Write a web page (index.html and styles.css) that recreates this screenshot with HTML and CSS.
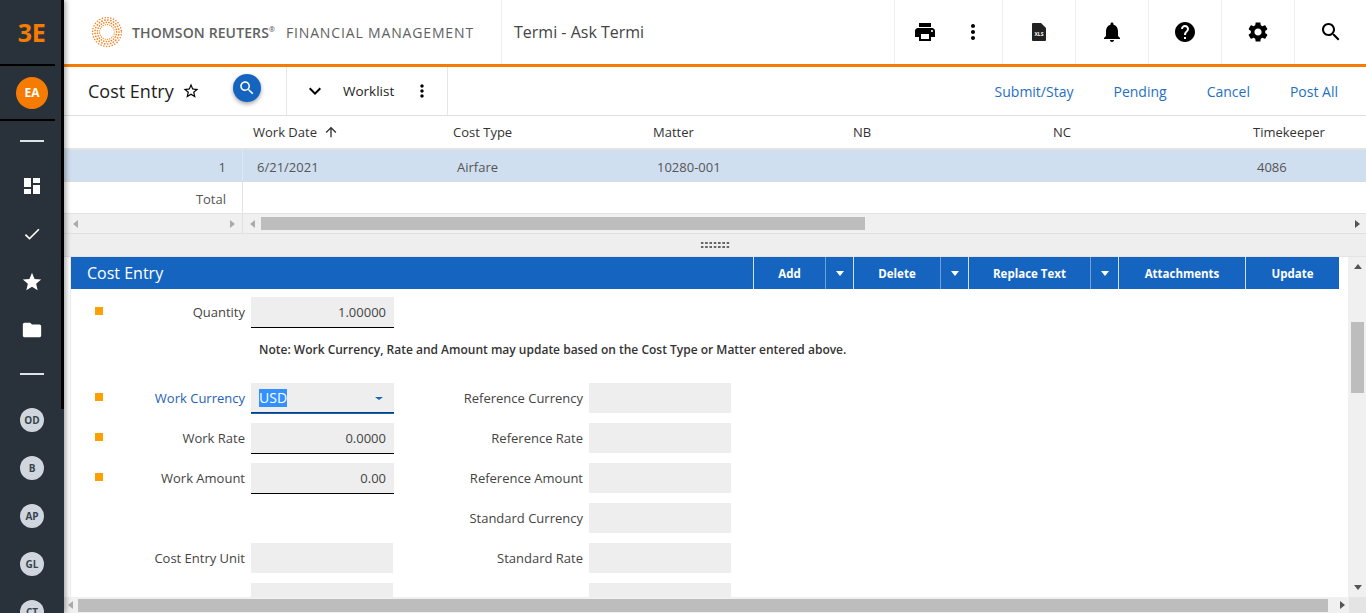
FILE: index.html
```html
<!DOCTYPE html>
<html lang="en">
<head>
  <meta charset="UTF-8">
  <meta name="viewport" content="width=device-width, initial-scale=1">
  <title>Cost Entry</title>
  <link rel="stylesheet" href="styles.css">
</head>
<body>
  <nav class="rail">
    <div class="brand">3E</div>
    <div class="rail-sep"></div>
    <div class="user"><span class="user-badge">EA</span></div>
    <div class="rail-sep"></div>
    <div class="rail-dash"></div>
    <div class="rail-item">
      <svg width="20" height="20" viewBox="0 0 20 20" fill="#fff"><path d="M2 2h7v9H2zM11 2h7v5h-7zM11 9h7v9h-7zM2 13h7v5H2z"/></svg>
    </div>
    <div class="rail-item">
      <svg width="20" height="20" viewBox="0 0 24 24" fill="#fff"><path d="M9 16.17L4.83 12l-1.42 1.41L9 19 21 7l-1.41-1.41z"/></svg>
    </div>
    <div class="rail-item">
      <svg width="22" height="22" viewBox="0 0 24 24" fill="#fff"><path d="M12 17.27L18.18 21l-1.64-7.03L22 9.24l-7.19-.61L12 2 9.19 8.63 2 9.24l5.46 4.73L5.82 21z"/></svg>
    </div>
    <div class="rail-item">
      <svg width="22" height="22" viewBox="0 0 24 24" fill="#fff"><path d="M10 4H4c-1.1 0-1.99.9-1.99 2L2 18c0 1.1.9 2 2 2h16c1.1 0 2-.9 2-2V8c0-1.1-.9-2-2-2h-8l-2-2z"/></svg>
    </div>
    <div class="rail-dash rail-dash-low"></div>
    <div class="rail-item"><span class="module">OD</span></div>
    <div class="rail-item"><span class="module">B</span></div>
    <div class="rail-item"><span class="module">AP</span></div>
    <div class="rail-item"><span class="module">GL</span></div>
    <div class="rail-item"><span class="module">CT</span></div>
  </nav>

  <div class="main">
    <header class="topbar">
      <div class="logo">
        <svg class="logo-mark" width="32" height="32" viewBox="0 0 32 32" fill="none" stroke="#f58220" stroke-linecap="round">
          <circle cx="16" cy="16" r="14.4" stroke-width="1.5" stroke-dasharray="0.1 2.75"/>
          <circle cx="16" cy="16" r="12" stroke-width="1.7" stroke-dasharray="0.1 2.9"/>
          <circle cx="16" cy="16" r="9.6" stroke-width="1.6" stroke-dasharray="0.1 2.5"/>
          <circle cx="16" cy="16" r="7.4" stroke-width="1.2" stroke-dasharray="0.1 2.1"/>
        </svg>
        <span class="logo-name">THOMSON REUTERS<sup>®</sup></span>
        <span class="logo-unit">FINANCIAL MANAGEMENT</span>
      </div>
      <div class="app-title">Termi - Ask Termi</div>
      <div class="tool tool-wide">
        <svg width="24" height="24" viewBox="0 0 24 24"><path d="M19 8H5c-1.66 0-3 1.34-3 3v6h4v4h12v-4h4v-6c0-1.66-1.34-3-3-3zm-3 11H8v-5h8v5zm3-7c-.55 0-1-.45-1-1s.45-1 1-1 1 .45 1 1-.45 1-1 1zm-1-9H6v4h12V3z"/></svg>
        <svg width="24" height="24" viewBox="0 0 24 24"><path d="M12 8c1.1 0 2-.9 2-2s-.9-2-2-2-2 .9-2 2 .9 2 2 2zm0 2c-1.1 0-2 .9-2 2s.9 2 2 2 2-.9 2-2-.9-2-2-2zm0 6c-1.1 0-2 .9-2 2s.9 2 2 2 2-.9 2-2-.9-2-2-2z"/></svg>
      </div>
      <div class="tool">
        <svg width="14" height="18" viewBox="0 0 14 18"><path fill="#222" d="M1 0h8l5 5v12a1 1 0 0 1-1 1H1a1 1 0 0 1-1-1V1a1 1 0 0 1 1-1z"/><text x="7" y="13" class="xls-text">XLS</text></svg>
      </div>
      <div class="tool">
        <svg width="24" height="24" viewBox="0 0 24 24"><path d="M12 22c1.1 0 2-.9 2-2h-4c0 1.1.89 2 2 2zm6-6v-5c0-3.07-1.64-5.64-4.5-6.32V4c0-.83-.67-1.5-1.5-1.5s-1.5.67-1.5 1.5v.68C7.63 5.36 6 7.92 6 11v5l-2 2v1h16v-1l-2-2z"/></svg>
      </div>
      <div class="tool">
        <svg width="24" height="24" viewBox="0 0 24 24"><path d="M12 2C6.48 2 2 6.48 2 12s4.48 10 10 10 10-4.48 10-10S17.52 2 12 2zm1 17h-2v-2h2v2zm2.07-7.75l-.9.92C13.45 12.9 13 13.5 13 15h-2v-.5c0-1.1.45-2.1 1.17-2.83l1.24-1.26c.37-.36.59-.86.59-1.41 0-1.1-.9-2-2-2s-2 .9-2 2H8c0-2.21 1.79-4 4-4s4 1.79 4 4c0 .88-.36 1.68-.93 2.25z"/></svg>
      </div>
      <div class="tool">
        <svg width="24" height="24" viewBox="0 0 24 24"><path d="M19.14 12.94c.04-.3.06-.61.06-.94 0-.32-.02-.64-.07-.94l2.03-1.58c.18-.14.23-.41.12-.61l-1.92-3.32c-.12-.22-.37-.29-.59-.22l-2.39.96c-.5-.38-1.03-.7-1.62-.94l-.36-2.54c-.04-.24-.24-.41-.48-.41h-3.84c-.24 0-.43.17-.47.41l-.36 2.54c-.59.24-1.13.57-1.62.94l-2.39-.96c-.22-.08-.47 0-.59.22L2.74 8.87c-.12.21-.08.47.12.61l2.03 1.58c-.05.3-.09.63-.09.94s.02.64.07.94l-2.03 1.58c-.18.14-.23.41-.12.61l1.92 3.32c.12.22.37.29.59.22l2.39-.96c.5.38 1.03.7 1.62.94l.36 2.54c.05.24.24.41.48.41h3.84c.24 0 .44-.17.47-.41l.36-2.54c.59-.24 1.13-.56 1.62-.94l2.39.96c.22.08.47 0 .59-.22l1.92-3.32c.12-.22.07-.47-.12-.61l-2.01-1.58zM12 15.6c-1.98 0-3.6-1.62-3.6-3.6s1.62-3.6 3.6-3.6 3.6 1.62 3.6 3.6-1.62 3.6-3.6 3.6z"/></svg>
      </div>
      <div class="tool">
        <svg width="24" height="24" viewBox="0 0 24 24"><path d="M15.5 14h-.79l-.28-.27C15.41 12.59 16 11.11 16 9.5 16 5.91 13.09 3 9.5 3S3 5.91 3 9.5 5.91 16 9.5 16c1.61 0 3.09-.59 4.23-1.57l.27.28v.79l5 4.99L20.49 19l-4.99-5zm-6 0C7.01 14 5 11.99 5 9.5S7.01 5 9.5 5 14 7.01 14 9.5 11.99 14 9.5 14z"/></svg>
      </div>
    </header>

    <div class="pagebar">
      <div class="page-title">
        <h1>Cost Entry</h1>
        <svg class="fav" width="18" height="18" viewBox="0 0 24 24"><path d="M22 9.24l-7.19-.62L12 2 9.19 8.63 2 9.24l5.46 4.73L5.82 21 12 17.27 18.18 21l-1.63-7.03L22 9.24zM12 15.4l-3.76 2.27 1-4.28-3.32-2.88 4.38-.38L12 6.1l1.71 4.04 4.38.38-3.32 2.88 1 4.28L12 15.4z"/></svg>
        <span class="find-btn">
          <svg width="18" height="18" viewBox="0 0 24 24" fill="#fff"><path d="M15.5 14h-.79l-.28-.27C15.41 12.59 16 11.11 16 9.5 16 5.91 13.09 3 9.5 3S3 5.91 3 9.5 5.91 16 9.5 16c1.61 0 3.09-.59 4.23-1.57l.27.28v.79l5 4.99L20.49 19l-4.99-5zm-6 0C7.01 14 5 11.99 5 9.5S7.01 5 9.5 5 14 7.01 14 9.5 11.99 14 9.5 14z"/></svg>
        </span>
      </div>
      <div class="worklist">
        <svg width="24" height="24" viewBox="0 0 24 24"><path d="M16.59 8.59L12 13.17 7.41 8.59 6 10l6 6 6-6z"/></svg>
        <span class="worklist-label">Worklist</span>
        <svg width="20" height="20" viewBox="0 0 24 24"><path d="M12 8c1.1 0 2-.9 2-2s-.9-2-2-2-2 .9-2 2 .9 2 2 2zm0 2c-1.1 0-2 .9-2 2s.9 2 2 2 2-.9 2-2-.9-2-2-2zm0 6c-1.1 0-2 .9-2 2s.9 2 2 2 2-.9 2-2-.9-2-2-2z"/></svg>
      </div>
      <div class="page-actions">
        <a>Submit/Stay</a>
        <a>Pending</a>
        <a>Cancel</a>
        <a>Post All</a>
      </div>
    </div>

    <div class="list">
      <div class="list-head">
        <div class="col-index"></div>
        <div class="col">Work Date
          <svg width="16" height="16" viewBox="0 0 24 24" fill="#333"><path d="M4 12l1.41 1.41L11 7.83V20h2V7.83l5.58 5.59L20 12l-8-8-8 8z"/></svg>
        </div>
        <div class="col">Cost Type</div>
        <div class="col">Matter</div>
        <div class="col">NB</div>
        <div class="col">NC</div>
        <div class="col">Timekeeper</div>
      </div>
      <div class="list-row">
        <div class="col-index">1</div>
        <div class="col cell">6/21/2021</div>
        <div class="col cell">Airfare</div>
        <div class="col cell">10280-001</div>
        <div class="col cell"></div>
        <div class="col cell"></div>
        <div class="col cell">4086</div>
        <div class="row-spin">
          <span class="arrow arrow-up arrow-light"></span>
          <span class="arrow arrow-down"></span>
        </div>
      </div>
      <div class="list-total">
        <div class="col-index">Total</div>
      </div>
      <div class="list-scroll">
        <div class="list-scroll-left">
          <span class="arrow arrow-left arrow-light"></span>
          <span class="arrow arrow-right arrow-light"></span>
        </div>
        <div class="list-scroll-right">
          <span class="arrow arrow-left arrow-light"></span>
          <span class="thumb thumb-list"></span>
          <span class="arrow arrow-right"></span>
        </div>
      </div>
    </div>

    <div class="splitter"><span class="grip"></span></div>

    <div class="detail">
      <div class="detail-body">
        <div class="detail-main">
          <div class="detail-head">
            <h2>Cost Entry</h2>
            <button class="act act-add">Add</button>
            <button class="act act-caret"><span class="arrow arrow-down arrow-white"></span></button>
            <button class="act act-delete">Delete</button>
            <button class="act act-caret"><span class="arrow arrow-down arrow-white"></span></button>
            <button class="act act-replace">Replace Text</button>
            <button class="act act-caret"><span class="arrow arrow-down arrow-white"></span></button>
            <button class="act act-attach">Attachments</button>
            <button class="act act-update">Update</button>
          </div>
          <div class="form">
            <div class="form-row">
              <span class="req"></span>
              <label>Quantity</label>
              <div class="field field-req num">1.00000</div>
            </div>
            <p class="note">Note: Work Currency, Rate and Amount may update based on the Cost Type or Matter entered above.</p>
            <div class="form-row">
              <span class="req"></span>
              <label class="label-active">Work Currency</label>
              <div class="field field-select"><span class="selected">USD</span><span class="arrow arrow-down arrow-blue"></span></div>
              <label>Reference Currency</label>
              <div class="field"></div>
            </div>
            <div class="form-row">
              <span class="req"></span>
              <label>Work Rate</label>
              <div class="field field-req num">0.0000</div>
              <label>Reference Rate</label>
              <div class="field"></div>
            </div>
            <div class="form-row">
              <span class="req"></span>
              <label>Work Amount</label>
              <div class="field field-req num">0.00</div>
              <label>Reference Amount</label>
              <div class="field"></div>
            </div>
            <div class="form-row">
              <span></span>
              <span></span>
              <span></span>
              <label>Standard Currency</label>
              <div class="field"></div>
            </div>
            <div class="form-row">
              <span></span>
              <label>Cost Entry Unit</label>
              <div class="field"></div>
              <label>Standard Rate</label>
              <div class="field"></div>
            </div>
            <div class="form-row">
              <span></span>
              <span></span>
              <div class="field"></div>
              <span></span>
              <div class="field"></div>
            </div>
          </div>
        </div>
        <div class="vscroll">
          <span class="arrow arrow-up arrow-dark"></span>
          <span class="thumb thumb-v"></span>
          <span class="arrow arrow-down arrow-dark"></span>
        </div>
      </div>
      <div class="hscroll">
        <div class="hscroll-track">
          <span class="arrow arrow-left arrow-light"></span>
          <span class="thumb thumb-h"></span>
          <span class="arrow arrow-right arrow-dark"></span>
        </div>
        <div class="corner"></div>
      </div>
    </div>
  </div>
</body>
</html>
```

FILE: styles.css
```css
html, body {
  height: 100%;
}
body {
  margin: 0;
  display: flex;
  height: 613px;
  overflow: hidden;
  font-family: "Open Sans", "Liberation Sans", sans-serif;
  font-size: 13px;
  color: #333;
  background: #fff;
}

/* left rail */
.rail {
  width: 64px;
  flex: none;
  height: 613px;
  overflow: hidden;
  background: #29323a linear-gradient(#000, #000) no-repeat 61px 0 / 3px 409px;
  box-shadow: 2px 0 5px rgba(0, 0, 0, 0.35);
  z-index: 2;
}
.brand {
  height: 64px;
  display: flex;
  align-items: center;
  justify-content: center;
  color: #f57c00;
  font-size: 25px;
  font-weight: 700;
  letter-spacing: -0.5px;
  padding-right: 1px;
  box-sizing: border-box;
}
.rail-sep {
  width: 55px;
  height: 2px;
  background: #000;
}
.user {
  height: 53px;
  display: flex;
  align-items: center;
  justify-content: center;
}
.user-badge {
  width: 32px;
  height: 32px;
  border-radius: 50%;
  background: #f57c00;
  color: #fff;
  font-size: 12px;
  font-weight: 700;
  display: flex;
  align-items: center;
  justify-content: center;
}
.rail-dash {
  width: 24px;
  height: 2px;
  margin: 19px 0 20px 20px;
  background: #dfe3e6;
}
.rail-dash-low {
  margin: 19px 0 21px 20px;
}
.rail-item {
  height: 48px;
  display: flex;
  align-items: center;
  justify-content: center;
}
.module {
  width: 24px;
  height: 24px;
  border-radius: 50%;
  background: #cfd6dd;
  color: #39434c;
  font-size: 10px;
  font-weight: 700;
  display: flex;
  align-items: center;
  justify-content: center;
}

.main {
  flex: 1;
  min-width: 0;
  display: flex;
  flex-direction: column;
}

/* top bar */
.topbar {
  height: 64px;
  flex: none;
  display: flex;
  align-items: stretch;
  border-bottom: 3px solid #f57c00;
}
.logo {
  width: 438px;
  flex: none;
  box-sizing: border-box;
  padding-left: 27px;
  display: flex;
  align-items: center;
  color: #616161;
  border-right: 1px solid #eee;
}
.logo-mark {
  margin-right: 9px;
}
.logo-name {
  font-size: 14px;
  font-weight: 600;
  letter-spacing: 0.12px;
  white-space: nowrap;
}
.logo-name sup {
  font-size: 7px;
  line-height: 0;
}
.logo-unit {
  margin-left: 11px;
  font-size: 14px;
  letter-spacing: 0.85px;
  white-space: nowrap;
}
.app-title {
  flex: 1;
  padding-left: 12px;
  font-size: 16px;
  line-height: 64px;
  color: #444;
}
.tool {
  width: 72px;
  flex: none;
  display: flex;
  align-items: center;
  justify-content: center;
  border-left: 1px solid #eee;
  padding-bottom: 1px;
  box-sizing: content-box;
}
.tool-wide {
  width: 108px;
  gap: 24px;
  padding-left: 1px;
  box-sizing: border-box;
}
.tool:last-child {
  width: 71px;
}
.xls-text {
  font-size: 5px;
  font-weight: 700;
  fill: #fff;
  text-anchor: middle;
}

/* page bar */
.pagebar {
  height: 48px;
  flex: none;
  display: flex;
  border-bottom: 1px solid #e0e0e0;
}
.page-title {
  width: 223px;
  flex: none;
  box-sizing: border-box;
  padding-left: 24px;
  display: flex;
  align-items: center;
  border-right: 1px solid #e6e6e6;
}
.page-title h1 {
  margin: 0 0 1px;
  font-size: 18px;
  font-weight: 400;
  color: #222;
}
.fav {
  margin-left: 8px;
}
.find-btn {
  width: 28px;
  height: 28px;
  margin: -6px 0 0 33px;
  border-radius: 50%;
  background: #1565c0;
  box-shadow: 0 2px 4px rgba(0, 0, 0, 0.35);
  display: flex;
  align-items: center;
  justify-content: center;
}
.worklist {
  width: 161px;
  flex: none;
  box-sizing: border-box;
  padding-left: 16px;
  display: flex;
  align-items: center;
  border-right: 1px solid #e6e6e6;
}
.worklist-label {
  margin: 0 18px 0 16px;
  font-size: 13.5px;
  color: #222;
}
.page-actions {
  flex: 1;
  display: flex;
  justify-content: flex-end;
  align-items: center;
  gap: 40px;
  padding-right: 28px;
  font-size: 14px;
  color: #1f6fc4;
}

/* list grid */
.list {
  flex: none;
  width: 1302px;
}
.list-head,
.list-row,
.list-total {
  display: flex;
}
.col-index {
  width: 179px;
  flex: none;
  box-sizing: border-box;
  padding-right: 16px;
  text-align: right;
}
.col {
  width: 200px;
  flex: none;
  box-sizing: border-box;
  padding-left: 10px;
}
.list-head {
  height: 32px;
  line-height: 33px;
  border-bottom: 2px solid #e3e3e3;
}
.list-head .col {
  display: flex;
  align-items: center;
  gap: 6px;
  color: #333;
  white-space: nowrap;
}
.list-row {
  height: 31px;
  line-height: 35px;
  background: #d0dff0;
  color: #555;
  border-bottom: 1px solid #dcdcdc;
}
.list-row .col-index {
  border-right: 1px solid #dfe7f2;
}
.list-row .cell {
  padding-left: 14px;
}
.list-row .cell:nth-child(n+3) {
  width: 200px;
}
.list-row .cell:last-of-type {
  width: 96px;
}
.row-spin {
  width: 17px;
  flex: none;
  margin-left: auto;
  background: #f0f0f0;
  display: flex;
  flex-direction: column;
  align-items: center;
  justify-content: center;
  gap: 9px;
}
.list-total {
  height: 32px;
  box-sizing: border-box;
  line-height: 35px;
  color: #555;
  border-bottom: 1px solid #e3e3e3;
}
.list-total .col-index {
  border-right: 1px solid #e3e3e3;
  height: 31px;
}
.list-scroll {
  height: 19px;
  display: flex;
  background: #f0f0f0;
  border-bottom: 1px solid #e0e0e0;
}
.list-scroll-left {
  width: 179px;
  flex: none;
  box-sizing: border-box;
  padding: 0 7px 0 9px;
  display: flex;
  align-items: center;
  justify-content: space-between;
  border-right: 1px solid #e0e0e0;
}
.list-scroll-right {
  flex: 1;
  display: flex;
  align-items: center;
  padding: 0 6px 0 7px;
}
.thumb {
  background: #bdbdbd;
  display: block;
}
.thumb-list {
  width: 604px;
  height: 13px;
  margin: 0 auto 0 6px;
}

/* arrows */
.arrow {
  width: 0;
  height: 0;
  display: block;
  flex: none;
}
.arrow-up {
  border: 4px solid transparent;
  border-top: 0;
  border-bottom: 5px solid #555;
}
.arrow-down {
  border: 4px solid transparent;
  border-bottom: 0;
  border-top: 5px solid #555;
}
.arrow-left {
  border: 4px solid transparent;
  border-left: 0;
  border-right: 5px solid #555;
}
.arrow-right {
  border: 4px solid transparent;
  border-right: 0;
  border-left: 5px solid #555;
}
.arrow-light {
  border-top-color: transparent;
  border-bottom-color: transparent;
  border-left-color: transparent;
  border-right-color: transparent;
}
.arrow-up.arrow-light {
  border-bottom-color: #aaa;
}
.arrow-left.arrow-light {
  border-right-color: #aaa;
}
.arrow-right.arrow-light {
  border-left-color: #aaa;
}
.arrow-white {
  border-top-color: #fff;
}
.arrow-blue {
  border-width: 3px 4px 0;
  border-top-color: #1565c0;
}

/* splitter */
.splitter {
  height: 22px;
  flex: none;
  background: #eee;
  display: flex;
  align-items: center;
  justify-content: center;
  padding-right: 0;
  border-bottom: 1px solid #e4e4e4;
}
.grip {
  width: 30px;
  height: 8px;
  background: radial-gradient(circle, #666 1.2px, transparent 1.5px) 0 0 / 4.3px 4px;
}

/* detail panel */
.detail {
  flex: 1;
  min-height: 0;
  display: flex;
  flex-direction: column;
}
.detail-body {
  flex: 1;
  min-height: 0;
  display: flex;
}
.detail-main {
  flex: 1;
  min-width: 0;
  box-sizing: border-box;
  margin-left: 6px;
  padding-right: 9px;
  border-left: 1px solid #eee;
  border-right: 1px solid #f0f0f0;
  display: flex;
  flex-direction: column;
}
.detail-head {
  height: 32px;
  flex: none;
  display: flex;
  background: #1565c0;
  margin-right: 0;
  color: #fff;
}
.detail-head h2 {
  margin: 0;
  flex: 1;
  padding-left: 16px;
  font-size: 16px;
  font-weight: 400;
  line-height: 32px;
}
.act {
  flex: none;
  padding: 0;
  border: 0;
  border-left: 1px solid #cfe0f3;
  background: none;
  color: #fff;
  font: 700 11.5px "Open Sans", sans-serif;
  display: flex;
  align-items: center;
  justify-content: center;
}
.act-add { width: 72px; }
.act-caret {
  width: 28px;
  border-left-color: #6f9fd8;
}
.act-delete { width: 87px; }
.act-replace { width: 122px; }
.act-attach { width: 127px; }
.act-update { width: 94px; }

.form {
  flex: 1;
  min-height: 0;
  overflow: hidden;
  padding: 8px 0 0 24px;
}
.form-row {
  display: grid;
  grid-template-columns: 8px 148px 142px 196px 142px;
  height: 30px;
  margin-bottom: 10px;
  line-height: 30px;
}
.req {
  width: 8px;
  height: 8px;
  margin-top: 10px;
  background: #ffa000;
}
.form-row label {
  padding-right: 6px;
  text-align: right;
  color: #444;
  white-space: nowrap;
}
.form-row .label-active {
  color: #1f62b8;
}
.field {
  height: 30px;
  background: #eee;
  box-sizing: border-box;
  color: #444;
}
.num {
  text-align: right;
  padding-right: 8px;
}
.field-req {
  height: 31px;
  width: 143px;
  border-bottom: 1px solid #000;
}
.field-select {
  width: 143px;
  height: 31px;
  padding: 0 11px 0 8px;
  display: flex;
  align-items: center;
  justify-content: space-between;
  border-bottom: 1px solid #1565c0;
  box-shadow: inset 0 -1px 0 #0d3c78;
}
.selected {
  background: #3390ff;
  color: #fff;
  line-height: 18px;
  font-size: 14px;
}
.note {
  margin: 14px 0 24px 164px;
  height: 18px;
  line-height: 18px;
  font-weight: 600;
  font-size: 12px;
  color: #333;
  white-space: nowrap;
}

/* detail scrollbars */
.vscroll {
  width: 17px;
  flex: none;
  background: #f0f0f0;
  display: flex;
  flex-direction: column;
  align-items: center;
  padding: 7px 0;
  box-sizing: border-box;
}
.thumb-v {
  width: 13px;
  height: 71px;
  margin: 53px 0 auto;
}
.hscroll {
  height: 16px;
  flex: none;
  display: flex;
}
.hscroll-track {
  flex: 1;
  background: #f0f0f0;
  display: flex;
  align-items: center;
  padding: 0 4px;
}
.thumb-h {
  width: 1250px;
  height: 13px;
  margin: 0 auto 0 5px;
}
.corner {
  width: 17px;
  flex: none;
  background: #e4e4e4;
}
```
